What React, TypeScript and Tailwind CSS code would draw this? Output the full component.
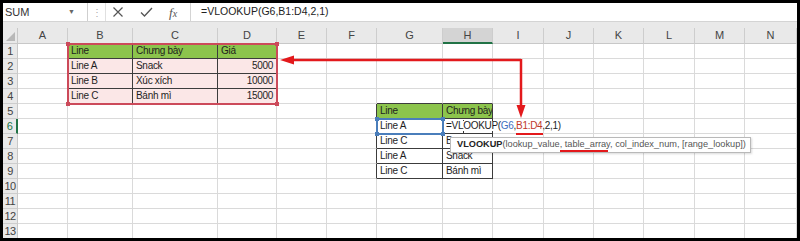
import React from 'react';

const COLS = [
  { l: 'A', w: 'w-[50px]' },
  { l: 'B', w: 'w-[65px]' },
  { l: 'C', w: 'w-[85px]' },
  { l: 'D', w: 'w-[59px]' },
  { l: 'E', w: 'w-[50px]' },
  { l: 'F', w: 'w-[50px]' },
  { l: 'G', w: 'w-[66px]' },
  { l: 'H', w: 'w-[50px]' },
  { l: 'I', w: 'w-[51px]' },
  { l: 'J', w: 'w-[50px]' },
  { l: 'K', w: 'w-[50px]' },
  { l: 'L', w: 'w-[51px]' },
  { l: 'M', w: 'w-[50px]' },
  { l: 'N', w: 'w-[52px]' },
];

type Cell = {
  text?: React.ReactNode;
  fill?: 'green' | 'pink';
  right?: boolean;
  darkR?: boolean;
  darkB?: boolean;
  overflow?: boolean;
};

const FORMULA = (
  <>
    =VLOOKUP(<span className="text-[#3f6fc0]">G6</span>,<span className="text-[#c0392b]">B1:D4</span>,2,1)
  </>
);

const DATA: Record<string, Cell> = {
  // bảng nguồn B1:D4
  B1: { text: 'Line', fill: 'green', darkR: true, darkB: true },
  C1: { text: 'Chưng bày', fill: 'green', darkR: true, darkB: true },
  D1: { text: 'Giá', fill: 'green', darkB: true },
  B2: { text: 'Line A', fill: 'pink', darkR: true, darkB: true },
  C2: { text: 'Snack', fill: 'pink', darkR: true, darkB: true },
  D2: { text: '5000', fill: 'pink', right: true, darkB: true },
  B3: { text: 'Line B', fill: 'pink', darkR: true, darkB: true },
  C3: { text: 'Xúc xích', fill: 'pink', darkR: true, darkB: true },
  D3: { text: '10000', fill: 'pink', right: true, darkB: true },
  B4: { text: 'Line C', fill: 'pink', darkR: true },
  C4: { text: 'Bánh mì', fill: 'pink', darkR: true },
  D4: { text: '15000', fill: 'pink', right: true },
  // bảng G5:H9
  G4: { darkB: true },
  H4: { darkB: true },
  F5: { darkR: true },
  F6: { darkR: true },
  F7: { darkR: true },
  F8: { darkR: true },
  F9: { darkR: true },
  G5: { text: 'Line', fill: 'green', darkR: true, darkB: true },
  H5: { text: 'Chưng bày', fill: 'green', darkR: true, darkB: true },
  G6: { text: 'Line A', darkR: true, darkB: true },
  H6: { text: FORMULA, overflow: true, darkR: true, darkB: true },
  G7: { text: 'Line C', darkR: true, darkB: true },
  H7: { text: 'B', darkR: true, darkB: true },
  G8: { text: 'Line A', darkR: true, darkB: true },
  H8: { text: 'Snack', darkR: true, darkB: true },
  G9: { text: 'Line C', darkR: true, darkB: true },
  H9: { text: 'Bánh mì', darkR: true, darkB: true },
};

const ROWS = [1, 2, 3, 4, 5, 6, 7, 8, 9, 10, 11, 12, 13];

function SheetCell({ id, w }: { id: string; w: string }) {
  const c = DATA[id] ?? {};
  const fill = c.fill === 'green' ? 'bg-[#8cc44c]' : c.fill === 'pink' ? 'bg-[#fbe7e7]' : 'bg-white';
  return (
    <div
      className={`${w} h-full shrink-0 border-r border-b ${c.darkR ? 'border-r-[#3c3c3c]' : 'border-r-[#dadada]'} ${
        c.darkB ? 'border-b-[#3c3c3c]' : 'border-b-[#dadada]'
      } ${fill} flex items-center px-[3px] text-[10px] tracking-[-0.3px] leading-none text-[#1e1e1e] whitespace-nowrap ${
        c.right ? 'justify-end' : ''
      } ${c.overflow ? 'overflow-visible' : 'overflow-hidden'}`}
    >
      {c.overflow ? <span className="relative z-10 bg-white pr-[2px]">{c.text}</span> : c.text}
    </div>
  );
}

function Corners({ color }: { color: string }) {
  return (
    <>
      <span className={`absolute -left-[3px] -top-[3px] size-[4px] ${color}`} />
      <span className={`absolute -right-[3px] -top-[3px] size-[4px] ${color}`} />
      <span className={`absolute -left-[3px] -bottom-[3px] size-[4px] ${color}`} />
      <span className={`absolute -right-[3px] -bottom-[3px] size-[4px] ${color}`} />
    </>
  );
}

export default function App() {
  return (
    <div className="w-[800px] h-[241px] bg-black p-[3px] overflow-hidden">
      <div className="relative w-[794px] h-[235px] bg-white overflow-hidden font-['Liberation_Sans',Arial,sans-serif]">
        {/* thanh công thức */}
        <div className="flex h-[19px] bg-white border-b border-[#d4d4d4] text-[11px] text-[#333]">
          <div className="w-[85px] shrink-0 flex items-center justify-between pl-[2px] pr-[12px] border-r border-[#cfcfcf]">
            <span>SUM</span>
            <span className="text-[7px] text-[#666]">▼</span>
          </div>
          <div className="w-[17px] shrink-0 flex items-center justify-center text-[#aaa] text-[10px]">⋮</div>
          <div className="w-[85px] shrink-0 flex items-center gap-[16px] pl-[6px] border-l border-[#e0e0e0]">
            <svg width="12" height="12" viewBox="0 0 12 12">
              <path d="M1.5 1.5 L10.5 10.5 M10.5 1.5 L1.5 10.5" stroke="#555" strokeWidth="1.2" fill="none" />
            </svg>
            <svg width="13" height="12" viewBox="0 0 13 12">
              <path d="M1 6.5 L4.5 10 L12 2" stroke="#555" strokeWidth="1.3" fill="none" />
            </svg>
            <span className="font-['Liberation_Serif',serif] italic text-[13px] text-[#555] leading-none">
              f<span className="text-[10px]">x</span>
            </span>
          </div>
          <div className="flex-1 flex items-center pl-[10px] border-l border-[#d4d4d4] text-[10.5px] text-[#222]">
            =VLOOKUP(G6,B1:D4,2,1)
          </div>
        </div>
        <div className="h-[6px] bg-[#e9e9e9]" />

        {/* tiêu đề cột */}
        <div className="flex h-[16px] bg-[#e9e9e9] text-[11px] text-[#444]">
          <div className="w-[15px] shrink-0 border-r border-b border-[#c8c8c8] relative">
            <svg width="9" height="9" viewBox="0 0 9 9" className="absolute right-[2px] bottom-[2px]">
              <polygon points="9,0 9,9 0,9" fill="#b8b8b8" />
            </svg>
          </div>
          {COLS.map((c) => (
            <div
              key={c.l}
              className={`${c.w} shrink-0 flex items-center justify-center border-r border-[#cdcdcd] ${
                c.l === 'H' ? 'bg-[#d4d4d4] border-b-2 border-b-[#217346]' : 'border-b border-b-[#c8c8c8]'
              }`}
            >
              {c.l}
            </div>
          ))}
        </div>

        {/* các dòng */}
        {ROWS.map((r) => (
          <div key={r} className="flex h-[15px]">
            <div
              className={`w-[15px] shrink-0 bg-[#e9e9e9] border-b border-[#cdcdcd] flex items-center justify-center text-[11px] tracking-[-0.5px] ${
                r === 6 ? 'border-r-2 border-r-[#217346] text-[#217346]' : 'border-r border-r-[#c8c8c8] text-[#444]'
              }`}
            >
              {r}
            </div>
            {COLS.map((c) => (
              <SheetCell key={c.l} id={`${c.l}${r}`} w={c.w} />
            ))}
          </div>
        ))}

        {/* vùng tham chiếu B1:D4 */}
        <div className="absolute left-[64px] top-[40px] w-[211px] h-[62px] border-2 border-[#cc4a5a]">
          <Corners color="bg-[#cc4a5a]" />
        </div>
        {/* vùng tham chiếu G6 */}
        <div className="absolute left-[373px] top-[115px] w-[68px] h-[17px] border-2 border-[#4a7ebb]">
          <Corners color="bg-[#4a7ebb]" />
        </div>
        <div className="absolute left-[460px] top-[117px] w-px h-[13px] bg-[#333]" />

        {/* gợi ý hàm */}
        <div className="absolute left-[447px] top-[134px] w-[301px] h-[16px] bg-white border border-[#b9b9b9] shadow-[1px_1px_2px_rgba(0,0,0,0.15)] flex items-center pl-[6px] text-[9.2px] text-[#555] whitespace-nowrap">
          <span className="font-bold text-[#222]">VLOOKUP</span>(lookup_value, table_array, col_index_num, [range_lookup])
        </div>

        {/* mũi tên và gạch chân đỏ */}
        <svg className="absolute inset-0 pointer-events-none" width="794" height="235">
          <g stroke="#e3191c" strokeWidth="2.5" fill="none">
            <path d="M518 57 L289 57" />
            <path d="M518 56 L518 104" />
          </g>
          <polygon points="277,57 291,52.5 291,61.5" fill="#e3191c" />
          <polygon points="518,115 513.5,102 522.5,102" fill="#e3191c" />
          <rect x="513" y="130" width="27" height="2" fill="#e3191c" />
          <rect x="557" y="147" width="48" height="2" fill="#e3191c" />
        </svg>
      </div>
    </div>
  );
}
